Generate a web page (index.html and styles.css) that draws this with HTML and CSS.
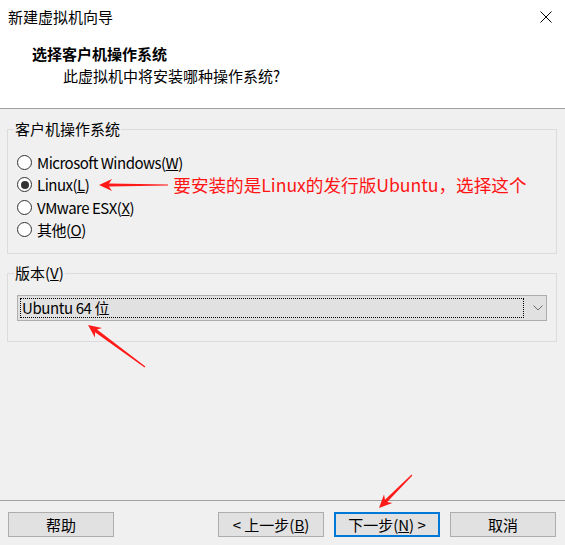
FILE: index.html
```html
<!DOCTYPE html>
<html lang="zh-CN">
<head>
<meta charset="utf-8">
<title>新建虚拟机向导</title>
<link rel="stylesheet" href="styles.css">
</head>
<body>
<div class="window">
  <header class="header">
    <div class="titlebar">
      <span class="title">新建虚拟机向导</span>
      <svg class="close" width="12" height="12" viewBox="0 0 12 12" aria-label="关闭">
        <path d="M0.5 0.5 L11.5 11.5 M11.5 0.5 L0.5 11.5" stroke="#000" stroke-width="1" fill="none"/>
      </svg>
    </div>
    <h1 class="heading">选择客户机操作系统</h1>
    <p class="subheading">此虚拟机中将安装哪种操作系统?</p>
  </header>

  <main class="content">
    <fieldset class="group group-os">
      <legend>客户机操作系统</legend>
      <label class="radio"><span class="radio-mark"></span><span class="radio-text">Microsoft Windows(<u>W</u>)</span></label>
      <label class="radio"><span class="radio-mark checked"></span><span class="radio-text">Linux(<u>L</u>)</span>
        <svg class="note-arrow" width="72" height="14" viewBox="0 0 72 14">
          <polygon points="2,7 15,1 12,5.4 71,6.4 71,7.6 12,8.6 15,13" fill="#ff1a1a"/>
        </svg>
        <span class="note">要安装的是Linux的发行版Ubuntu，选择这个</span>
      </label>
      <label class="radio"><span class="radio-mark"></span><span class="radio-text">VMware ESX(<u>X</u>)</span></label>
      <label class="radio"><span class="radio-mark"></span><span class="radio-text">其他(<u>O</u>)</span></label>
    </fieldset>

    <fieldset class="group group-version">
      <legend>版本(<u>V</u>)</legend>
      <div class="combo">
        <span class="combo-value">Ubuntu 64 位</span>
        <svg class="combo-chevron" width="10" height="6" viewBox="0 0 10 6">
          <polyline points="0.5,0.5 5,5 9.5,0.5" fill="none" stroke="#6d6d6d" stroke-width="1"/>
        </svg>
      </div>
    </fieldset>
  </main>

  <footer class="footer">
    <button class="btn btn-help">帮助</button>
    <button class="btn">&lt; 上一步(<u>B</u>)</button>
    <button class="btn btn-primary">下一步(<u>N</u>) &gt;</button>
    <button class="btn">取消</button>
  </footer>

  <svg class="annotations" width="565" height="545" viewBox="0 0 565 545">
    <!-- arrow pointing at the version box -->
    <polygon points="88,325 102,327.9 97,329.6 145.4,366.5 144.6,367.5 95.1,332.2 94.9,337.5" fill="#ff1a1a"/>
    <!-- arrow pointing at the next button -->
    <polygon points="379,508 392.4,503 387.2,502 412.4,475.4 411.6,474.6 385,499.8 384,494.6" fill="#ff1a1a"/>
  </svg>
</div>
</body>
</html>
```

FILE: styles.css
```css
* {
  box-sizing: border-box;
}

html,
body {
  margin: 0;
  height: 100%;
}

body {
  font-family: "Noto Sans CJK SC", "Noto Sans", sans-serif;
  font-size: 15px;
  color: #000;
  background: #f0f0f0;
}

.window {
  position: relative;
  display: flex;
  flex-direction: column;
  width: 565px;
  height: 545px;
  overflow: hidden;
}

/* white banner with title and step description */
.header {
  flex: none;
  height: 109px;
  background: #fff;
  border-bottom: 1px solid #a0a0a0;
}

.titlebar {
  height: 34px;
  display: flex;
  align-items: center;
  justify-content: space-between;
  padding: 0 13px 0 8px;
}

.title {
  line-height: 20px;
}

.close {
  display: block;
}

.heading {
  margin: 10px 0 0 32px;
  font-size: 15px;
  font-weight: bold;
  line-height: 20px;
}

.subheading {
  margin: 2px 0 0 63px;
  line-height: 20px;
}

/* group boxes */
.content {
  flex: 1;
  padding-top: 10px;
}

.group {
  margin: 0 8px 0 7px;
  padding: 0 0 0 6px;
  border: 1px solid #dcdcdc;
  min-width: 0;
}

.group legend {
  padding: 0 1px;
  line-height: 20px;
}

.group-os {
  padding-top: 12px;
  padding-bottom: 12px;
}

.group-version {
  margin-top: 9px;
  padding-top: 12px;
  padding-bottom: 20px;
}

.radio {
  display: flex;
  align-items: center;
  height: 22.5px;
  padding-left: 3px;
  white-space: nowrap;
}

.radio-text {
  letter-spacing: -0.5px;
}

.radio-mark {
  flex: none;
  width: 15px;
  height: 15px;
  margin-right: 5px;
  border: 1px solid #333;
  border-radius: 50%;
  background: #fff;
  display: flex;
  align-items: center;
  justify-content: center;
}

.radio-mark.checked::after {
  content: "";
  width: 8px;
  height: 8px;
  border-radius: 50%;
  background: #333;
}

.note-arrow {
  flex: none;
  margin-left: 8px;
}

.note {
  margin-left: 4px;
  color: #ff1414;
  font-size: 17.6px;
}

/* drop-down */
.combo {
  display: flex;
  align-items: center;
  height: 26px;
  margin: 0 9px 0 3px;
  padding: 2px 0 2px 2px;
  background: #e1e1e1;
  border: 1px solid #adadad;
}

.combo-value {
  width: 504px;
  height: 20px;
  padding-left: 1px;
  border: 1px dotted #000;
  line-height: 18px;
  letter-spacing: -0.4px;
}

.combo-chevron {
  display: block;
  margin-left: 9px;
}

/* button row */
.footer {
  flex: none;
  height: 45px;
  display: flex;
  align-items: flex-start;
  gap: 10px;
  padding: 11px 9px 0 8px;
  border-top: 1px solid #a0a0a0;
}

.btn {
  width: 106px;
  height: 25px;
  padding: 0;
  font: inherit;
  color: #000;
  background: #e1e1e1;
  border: 1px solid #adadad;
  display: flex;
  align-items: center;
  justify-content: center;
}

.btn-help {
  margin-right: auto;
}

.btn-primary {
  border: 2px solid #0078d7;
}

.annotations {
  position: absolute;
  top: 0;
  left: 0;
  pointer-events: none;
}
```
